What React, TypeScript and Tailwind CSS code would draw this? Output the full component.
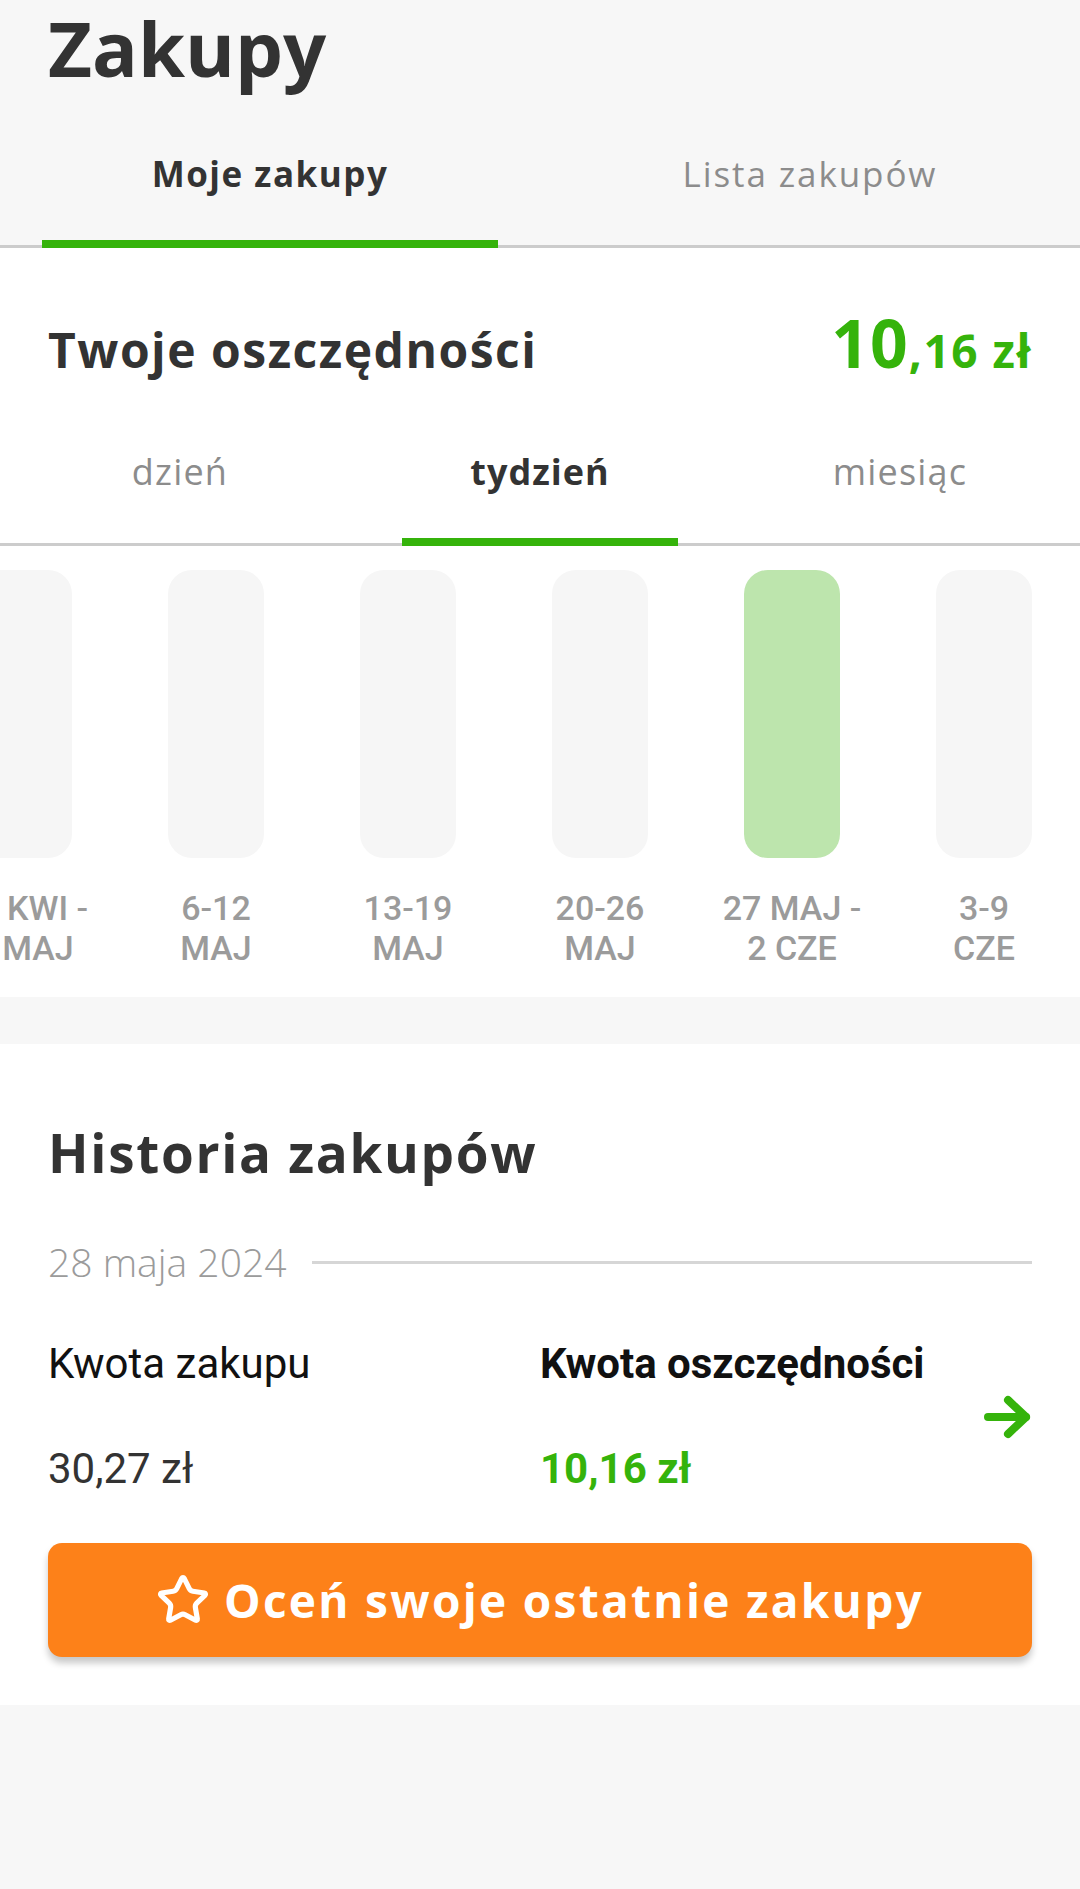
import { Star } from "lucide-react";

const weeks = [
  { top: "29 KWI -", bottom: "5 MAJ", active: false },
  { top: "6-12", bottom: "MAJ", active: false },
  { top: "13-19", bottom: "MAJ", active: false },
  { top: "20-26", bottom: "MAJ", active: false },
  { top: "27 MAJ -", bottom: "2 CZE", active: true },
  { top: "3-9", bottom: "CZE", active: false },
];

function ArrowIcon() {
  return (
    <svg width="52" height="48" viewBox="0 0 52 48" fill="none">
      <path d="M8 24H46" stroke="#35b30b" strokeWidth="8" strokeLinecap="round" />
      <path d="M28 7L46 24L28 41" stroke="#35b30b" strokeWidth="8" strokeLinecap="round" strokeLinejoin="round" />
    </svg>
  );
}

export default function App() {
  return (
    <div className="min-h-[1889px] w-[1080px] bg-[#f7f7f7] font-['Open_Sans',sans-serif] text-[#333333]">
      {/* header */}
      <div className="bg-[#f7f7f7]">
        <h1 className="pl-[48px] pt-[10px] text-[76px] font-bold leading-[76px]">Zakupy</h1>
        <div className="flex border-b-[3px] border-[#cccccc]">
          <div className="flex flex-1 flex-col">
            <div className="flex h-[154px] items-center justify-center pt-[22px] text-[35px] font-bold tracking-[1.5px]">
              Moje zakupy
            </div>
            <div className="-mb-[3px] mx-[42px] h-[8px] bg-[#35b30b]" />
          </div>
          <div className="flex flex-1 flex-col">
            <div className="flex h-[154px] items-center justify-center pt-[22px] text-[35px] tracking-[1.9px] text-[#8c8c8c]">
              Lista zakupów
            </div>
            <div className="-mb-[3px] mx-[42px] h-[8px]" />
          </div>
        </div>
      </div>

      {/* savings */}
      <div className="bg-white">
        <div className="flex h-[162px] items-baseline justify-between px-[48px] pt-[66px]">
          <h2 className="text-[48px] font-bold leading-[56px] tracking-[1.5px]">Twoje oszczędności</h2>
          <div className="font-bold leading-[56px] text-[#35b30b]">
            <span className="text-[66px] tracking-[1px]">10</span>
            <span className="text-[46px] tracking-[1.5px]">,16 zł</span>
          </div>
        </div>
        <div className="flex border-b-[3px] border-[#cccccc]">
          {["dzień", "tydzień", "miesiąc"].map((p) => (
            <div key={p} className="flex flex-1 flex-col">
              <div
                className={
                  p === "tydzień"
                    ? "flex h-[128px] items-center justify-center pb-[4px] text-[36px] font-bold tracking-[1px]"
                    : "flex h-[128px] items-center justify-center pb-[4px] text-[36px] tracking-[1.2px] text-[#8c8c8c]"
                }
              >
                {p}
              </div>
              <div className={p === "tydzień" ? "-mb-[3px] mx-[42px] h-[8px] bg-[#35b30b]" : "-mb-[3px] mx-[42px] h-[8px]"} />
            </div>
          ))}
        </div>
        <div className="overflow-hidden pb-[29px] pt-[24px]">
          <div className="-ml-[72px] flex">
            {weeks.map((w) => (
              <div key={w.top} className="flex w-[192px] shrink-0 flex-col items-center">
                <div className={w.active ? "h-[288px] w-[96px] rounded-[24px] bg-[#bde5ad]" : "h-[288px] w-[96px] rounded-[24px] bg-[#f6f6f6]"} />
                <div className="mt-[30px] whitespace-nowrap text-center font-['Roboto',sans-serif] text-[34px] font-medium leading-[40px] text-[#9b9b9b]">
                  <div>{w.top}</div>
                  <div>{w.bottom}</div>
                </div>
              </div>
            ))}
          </div>
        </div>
      </div>

      <div className="h-[47px]" />

      {/* history */}
      <div className="bg-white px-[48px] pb-[48px] pt-[81px]">
        <h2 className="text-[53px] font-bold leading-[56px] tracking-[1.7px]">Historia zakupów</h2>
        <div className="mt-[57px] flex h-[48px] items-center gap-[26px]">
          <span className="text-[39px] font-light text-[#9b9b9b]">28 maja 2024</span>
          <div className="h-[3px] flex-1 bg-[#d6d6d6]" />
        </div>
        <div className="mt-[54px] flex items-center font-['Roboto',sans-serif]">
          <div className="w-[492px] shrink-0">
            <div className="text-[42px] leading-[48px] text-[#111111]">Kwota zakupu</div>
            <div className="mt-[57px] text-[42px] leading-[48px] text-[#333333]">30,27 zł</div>
          </div>
          <div className="flex-1">
            <div className="text-[42px] font-bold leading-[48px] text-[#111111]">Kwota oszczędności</div>
            <div className="mt-[57px] text-[42px] font-bold leading-[48px] text-[#35b30b]">10,16 zł</div>
          </div>
          <div>
            <ArrowIcon />
          </div>
        </div>
        <button className="mt-[50px] flex h-[114px] w-full items-center justify-center gap-[14px] rounded-[14px] bg-[#fd8119] text-white shadow-[0_6px_7px_rgba(0,0,0,0.22)]">
          <Star size={54} strokeWidth={2.3} />
          <span className="text-[46px] font-bold tracking-[2.3px]">Oceń swoje ostatnie zakupy</span>
        </button>
      </div>
    </div>
  );
}
